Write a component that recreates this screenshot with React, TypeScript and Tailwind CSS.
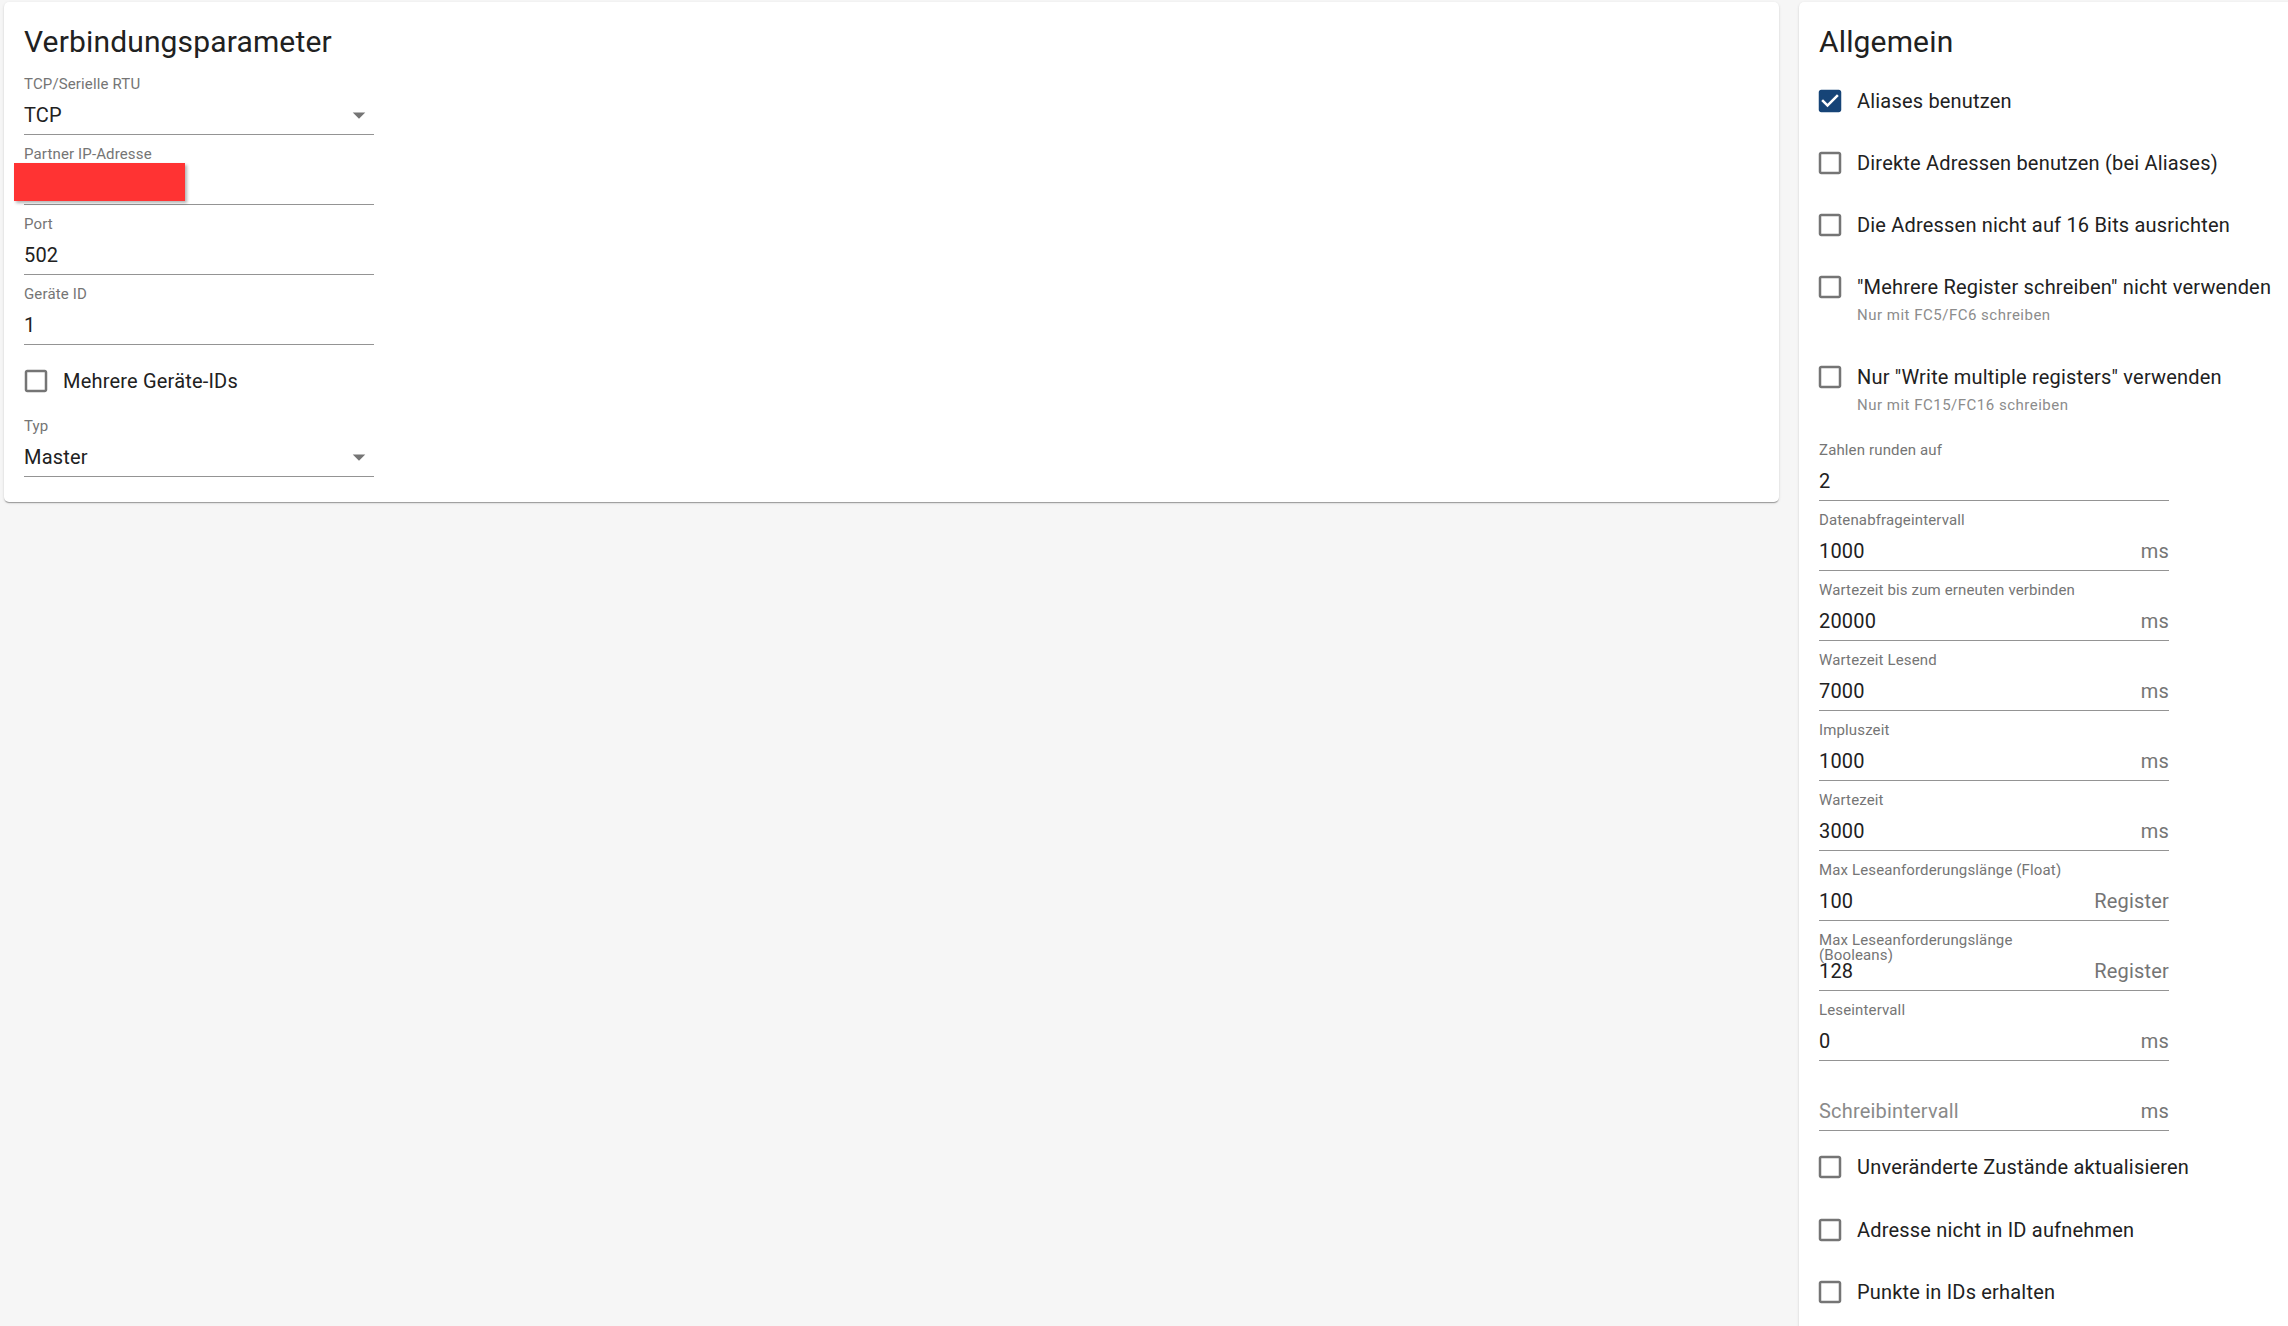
import React from "react";

const paper =
  "shrink-0 rounded-[5px] bg-white shadow-[0_2px_1px_-1px_rgba(0,0,0,0.2),0_1px_1px_0_rgba(0,0,0,0.14),0_1px_3px_0_rgba(0,0,0,0.12)]";

const ArrowDown = () => (
  <svg viewBox="0 0 24 24" className="h-[30px] w-[30px] shrink-0" fill="#757575">
    <path d="M7 10l5 5 5-5z" />
  </svg>
);

const Box = ({ checked }: { checked?: boolean }) => (
  <svg viewBox="0 0 24 24" className="-my-[4px] -ml-[4px] h-[30px] w-[30px] shrink-0" fill={checked ? "#164477" : "#757575"}>
    {checked ? (
      <path d="M19 3H5c-1.11 0-2 .9-2 2v14c0 1.1.89 2 2 2h14c1.11 0 2-.9 2-2V5c0-1.1-.89-2-2-2zm-9 14l-5-5 1.41-1.41L10 14.17l7.59-7.59L19 8l-9 9z" />
    ) : (
      <path d="M19 5v14H5V5h14m0-2H5c-1.1 0-2 .9-2 2v14c0 1.1.9 2 2 2h14c1.1 0 2-.9 2-2V5c0-1.1-.9-2-2-2z" />
    )}
  </svg>
);

type FieldProps = {
  label?: string;
  value?: string;
  placeholder?: string;
  unit?: string;
  select?: boolean;
  redacted?: boolean;
};

const Field = ({ label, value, placeholder, unit, select, redacted }: FieldProps) => (
  <div className="relative w-[350px] border-b border-[#949494] pb-[7px] pt-[12px]">
    <div className="h-[15px] max-w-[260px] text-[15px] leading-[15px] tracking-[0.14px] text-[#757575]">{label}</div>
    <div className="mt-[11px] flex h-[24px] items-center justify-between tracking-[0.19px]">
      {value !== undefined ? (
        <span className="text-[20px] leading-[24px] text-[#212121]">{value}</span>
      ) : (
        <span className="text-[20px] leading-[24px] text-[#8a8a8a]">{placeholder}</span>
      )}
      {unit && <span className="text-[20px] leading-[24px] text-[#757575]">{unit}</span>}
      {select && <ArrowDown />}
    </div>
    {redacted && (
      <div className="absolute left-[-10px] top-[28px] h-[38px] w-[171px] bg-[#ff3333] shadow-[2px_2px_3px_rgba(0,0,0,0.3)]" />
    )}
  </div>
);

const Check = ({ label, checked, className = "" }: { label: string; checked?: boolean; className?: string }) => (
  <div className={"flex h-[22px] items-center " + className}>
    <Box checked={checked} />
    <span className="ml-[12px] whitespace-nowrap text-[20px] leading-[24px] tracking-[0.19px] text-[#212121]">{label}</span>
  </div>
);

const Helper = ({ text }: { text: string }) => (
  <div className="ml-[38px] mt-[10px] h-[15px] text-[15px] leading-[15px] tracking-[0.5px] text-[#8c8c8c]">{text}</div>
);

export default function App() {
  return (
    <div className="flex h-[1326px] w-[2288px] items-start gap-[20px] overflow-hidden bg-[#f6f6f6] pl-[4px] pt-[2px] font-[Roboto,sans-serif]">
      {/* Verbindungsparameter */}
      <div className={paper + " w-[1775px] px-[20px] pb-[25px] pt-[20px]"}>
        <h2 className="mb-[3px] text-[30px] font-normal leading-[40px] tracking-[0.15px] text-[#212121]">Verbindungsparameter</h2>
        <Field label="TCP/Serielle RTU" value="TCP" select />
        <Field label="Partner IP-Adresse" value="" redacted />
        <Field label="Port" value="502" />
        <Field label="Geräte ID" value="1" />
        <div className="h-[62px] pt-[25px]">
          <Check label="Mehrere Geräte-IDs" className="ml-[1px]" />
        </div>
        <Field label="Typ" value="Master" select />
      </div>

      {/* Allgemein */}
      <div className={paper + " w-[540px] px-[20px] pb-[60px] pt-[20px]"}>
        <h2 className="text-[30px] font-normal leading-[40px] tracking-[0.15px] text-[#212121]">Allgemein</h2>
        <Check label="Aliases benutzen" checked className="mt-[28px]" />
        <Check label="Direkte Adressen benutzen (bei Aliases)" className="mt-[40px]" />
        <Check label="Die Adressen nicht auf 16 Bits ausrichten" className="mt-[40px]" />
        <Check label={'"Mehrere Register schreiben" nicht verwenden'} className="mt-[40px]" />
        <Helper text="Nur mit FC5/FC6 schreiben" />
        <Check label={'Nur "Write multiple registers" verwenden'} className="mt-[43px]" />
        <Helper text="Nur mit FC15/FC16 schreiben" />
        <div className="mt-[18px]">
          <Field label="Zahlen runden auf" value="2" />
          <Field label="Datenabfrageintervall" value="1000" unit="ms" />
          <Field label="Wartezeit bis zum erneuten verbinden" value="20000" unit="ms" />
          <Field label="Wartezeit Lesend" value="7000" unit="ms" />
          <Field label="Impluszeit" value="1000" unit="ms" />
          <Field label="Wartezeit" value="3000" unit="ms" />
          <Field label="Max Leseanforderungslänge (Float)" value="100" unit="Register" />
          <Field label="Max Leseanforderungslänge (Booleans)" value="128" unit="Register" />
          <Field label="Leseintervall" value="0" unit="ms" />
          <Field placeholder="Schreibintervall" unit="ms" />
        </div>
        <Check label="Unveränderte Zustände aktualisieren" className="mt-[25px]" />
        <Check label="Adresse nicht in ID aufnehmen" className="mt-[41px]" />
        <Check label="Punkte in IDs erhalten" className="mt-[40px]" />
      </div>
    </div>
  );
}
